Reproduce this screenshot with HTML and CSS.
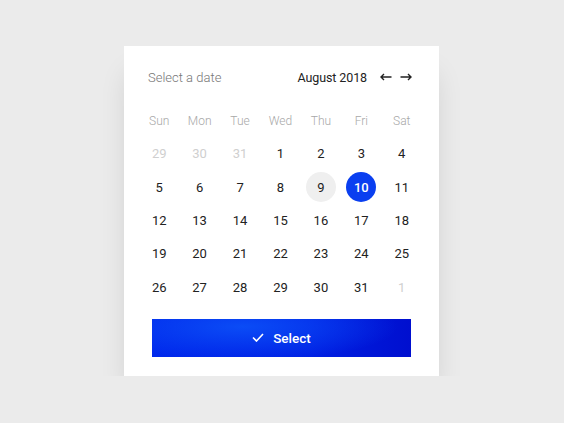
FILE: index.html
```html
<!DOCTYPE html>
<html lang="en">
<head>
  <meta charset="UTF-8" />
  <title>Select a date</title>
  <link rel="stylesheet" href="styles.css">
</head>
<body>
  <div class="picker">
    <div class="picker-head">
      <span class="picker-title">Select a date</span>
      <div class="picker-nav">
        <span class="month">August 2018</span>
        <button class="arrow" aria-label="Previous month">
          <svg width="12" height="8" viewBox="0 0 12 8"><path d="M11.5 4H1M4 1L1 4l3 3" fill="none" stroke="#222" stroke-width="1.4"/></svg>
        </button>
        <button class="arrow" aria-label="Next month">
          <svg width="12" height="8" viewBox="0 0 12 8"><path d="M0.5 4H11M8 1l3 3-3 3" fill="none" stroke="#222" stroke-width="1.4"/></svg>
        </button>
      </div>
    </div>

    <div class="days">
      <span class="weekday">Sun</span>
      <span class="weekday">Mon</span>
      <span class="weekday">Tue</span>
      <span class="weekday">Wed</span>
      <span class="weekday">Thu</span>
      <span class="weekday">Fri</span>
      <span class="weekday">Sat</span>

      <span class="day muted">29</span>
      <span class="day muted">30</span>
      <span class="day muted">31</span>
      <span class="day">1</span>
      <span class="day">2</span>
      <span class="day">3</span>
      <span class="day">4</span>

      <span class="day">5</span>
      <span class="day">6</span>
      <span class="day">7</span>
      <span class="day">8</span>
      <span class="day"><b class="today">9</b></span>
      <span class="day"><b class="chosen">10</b></span>
      <span class="day">11</span>

      <span class="day">12</span>
      <span class="day">13</span>
      <span class="day">14</span>
      <span class="day">15</span>
      <span class="day">16</span>
      <span class="day">17</span>
      <span class="day">18</span>

      <span class="day">19</span>
      <span class="day">20</span>
      <span class="day">21</span>
      <span class="day">22</span>
      <span class="day">23</span>
      <span class="day">24</span>
      <span class="day">25</span>

      <span class="day">26</span>
      <span class="day">27</span>
      <span class="day">28</span>
      <span class="day">29</span>
      <span class="day">30</span>
      <span class="day">31</span>
      <span class="day muted">1</span>
    </div>

    <button class="select-btn">
      <svg width="12" height="9" viewBox="0 0 12 9"><path d="M1 4.5l3.5 3.5L11 1" fill="none" stroke="#fff" stroke-width="1.6"/></svg>
      Select
    </button>
  </div>
</body>
</html>
```

FILE: styles.css
```css
body {
  margin: 0;
  background: #ebebeb;
  font-family: Roboto, 'Liberation Sans', sans-serif;
  color: #222;
}

.picker {
  box-sizing: border-box;
  width: 315px;
  height: 330px;
  margin: 46px 0 0 124px;
  padding: 21px 28px 19px;
  background: #fff;
  box-shadow: 0 22px 28px -6px rgba(0, 0, 0, 0.14);
}

.picker-head {
  display: flex;
  justify-content: space-between;
  align-items: center;
  height: 20px;
  margin-left: -4px;
  margin-right: -1px;
}

.picker-title {
  font-size: 13px;
  font-weight: 300;
  color: #777;
}

.picker-nav {
  display: flex;
  align-items: center;
}

.month {
  font-size: 12.5px;
  margin-right: 5px;
  letter-spacing: -0.1px;
}

.arrow {
  display: flex;
  padding: 0;
  margin-left: 8px;
  background: none;
  border: none;
}

.days {
  display: grid;
  grid-template-columns: repeat(7, 1fr);
  grid-auto-rows: 33.3px;
  margin: 17px -11px 0 -13px;
}

.days span {
  display: flex;
  justify-content: center;
  align-items: center;
  font-size: 13px;
}

.days .weekday {
  font-size: 12px;
  font-weight: 300;
  color: #a8a8a8;
}

.days .muted {
  color: #cfcfcf;
}

.today,
.chosen {
  display: flex;
  justify-content: center;
  align-items: center;
  width: 30px;
  height: 30px;
  border-radius: 50%;
  font-weight: normal;
}

.today {
  background: #efefef;
}

.chosen {
  background: #0a3ff0;
  color: #fff;
  font-weight: 500;
}

.select-btn {
  display: flex;
  justify-content: center;
  align-items: center;
  gap: 9px;
  width: 100%;
  height: 38px;
  margin-top: 15px;
  border: none;
  color: #fff;
  font-family: inherit;
  font-size: 13.5px;
  font-weight: 500;
  background: radial-gradient(ellipse 60% 90% at 35% 20%, #0b4cf6 0%, rgba(11, 76, 246, 0) 100%),
              linear-gradient(90deg, #0028ec 0%, #0020e4 60%, #000fcf 100%);
}
```
